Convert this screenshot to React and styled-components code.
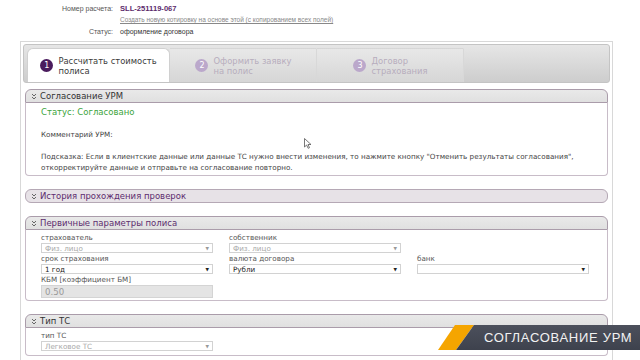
import React from 'react';
import styled, { createGlobalStyle } from 'styled-components';

const GlobalStyle = createGlobalStyle`
  html, body {
    margin: 0;
    padding: 0;
    background: #ffffff;
    overflow: hidden;
  }
`;

const tabs = [
    { num: 1, lines: ['Рассчитать стоимость', 'полиса'], active: true, width: 143 },
    { num: 2, lines: ['Оформить заявку', 'на полис'], width: 147 },
    { num: 3, lines: ['Договор', 'страхования'], width: 147 },
];

const Chevrons = () => (
    <svg width="6" height="7" viewBox="0 0 6 7">
        <path d="M1 1 L3 3 L5 1 M1 4 L3 6 L5 4" fill="none" stroke="#666" strokeWidth="1"/>
    </svg>
);

const Select = ({ value, muted }) => (
    <SelectBox muted={muted}>
        <span>{value}</span>
        <Arrow muted={muted}>▼</Arrow>
    </SelectBox>
);

const Field = ({ label, children }) => (
    <FieldBox>
        <FieldLabel>{label}</FieldLabel>
        {children}
    </FieldBox>
);

class App extends React.Component {
    render() {
        return (
            <Page>
                <GlobalStyle/>
                <Info>
                    <InfoLabel>Номер расчета:</InfoLabel>
                    <InfoNumber>SLL-251119-067</InfoNumber>
                    <span/>
                    <InfoLink>Создать новую котировку на основе этой (с копированием всех полей)</InfoLink>
                    <InfoLabel status>Статус:</InfoLabel>
                    <InfoValue status>оформление договора</InfoValue>
                </Info>
                <Wrapper>
                    <TabBar>
                        {tabs.map(t => (
                            <Tab key={t.num} active={t.active} style={{ width: t.width }}>
                                <TabNum active={t.active}>{t.num}</TabNum>
                                <TabText active={t.active}>
                                    {t.lines[0]}<br/>{t.lines[1]}
                                </TabText>
                            </Tab>
                        ))}
                    </TabBar>
                    <Panels>
                        <Panel>
                            <PanelHeader>
                                <Chevrons/>
                                <HeaderTitle>Согласование УРМ</HeaderTitle>
                            </PanelHeader>
                            <PanelBody pad="4px 15px 2px">
                                <StatusLine>Статус: Согласовано</StatusLine>
                                <Comment>Комментарий УРМ:</Comment>
                                <Hint>
                                    Подсказка: Если в клиентские данные или данные ТС нужно внести изменения, то нажмите кнопку "Отменить результаты согласования",<br/>
                                    откорректируйте данные и отправьте на согласование повторно.
                                </Hint>
                                <Cursor width="8" height="11" viewBox="0 0 8 11">
                                    <path d="M0.5 0.5 L0.5 9 L2.6 7 L4.2 10.3 L5.5 9.7 L4 6.5 L7 6.5 Z" fill="#fff" stroke="#555" strokeWidth="0.8"/>
                                </Cursor>
                            </PanelBody>
                        </Panel>

                        <Panel>
                            <PanelHeader collapsed>
                                <Chevrons/>
                                <HeaderTitle purple>История прохождения проверок</HeaderTitle>
                            </PanelHeader>
                        </Panel>

                        <Panel>
                            <PanelHeader>
                                <Chevrons/>
                                <HeaderTitle purple>Первичные параметры полиса</HeaderTitle>
                            </PanelHeader>
                            <PanelBody pad="3px 15px 2px">
                                <FieldGrid>
                                    <Field label="страхователь"><Select value="Физ. лицо" muted/></Field>
                                    <Field label="собственник"><Select value="Физ. лицо" muted/></Field>
                                    <span/>
                                    <Field label="срок страхования"><Select value="1 год"/></Field>
                                    <Field label="валюта договора"><Select value="Рубли"/></Field>
                                    <Field label="банк"><Select value=""/></Field>
                                    <Field label="КБМ [коэффициент БМ]"><ReadOnly>0.50</ReadOnly></Field>
                                </FieldGrid>
                            </PanelBody>
                        </Panel>

                        <Panel>
                            <PanelHeader>
                                <Chevrons/>
                                <HeaderTitle>Тип ТС</HeaderTitle>
                            </PanelHeader>
                            <PanelBody pad="3px 15px 4px">
                                <FieldGrid>
                                    <Field label="тип ТС"><Select value="Легковое ТС" muted/></Field>
                                </FieldGrid>
                            </PanelBody>
                        </Panel>
                    </Panels>
                </Wrapper>

                <Banner>
                    <Stripe/>
                    <Plate>СОГЛАСОВАНИЕ УРМ</Plate>
                </Banner>
            </Page>
        );
    }
}

export default App;

const Page = styled.div`
  position: relative;
  width: 640px;
  height: 360px;
  overflow: hidden;
  padding-top: 3px;
  box-sizing: border-box;
  font-family: "Liberation Sans", Arial, sans-serif;
`;

const Info = styled.div`
  display: grid;
  grid-template-columns: 113px auto;
  column-gap: 7px;
  font-size: 7px;
  line-height: 11px;
`;

const InfoLabel = styled.div`
  text-align: right;
  color: #555;
  margin-top: ${props => props.status ? '1px' : '0'};
`;

const InfoNumber = styled.div`
  font-weight: bold;
  color: #5b2a6b;
  font-size: 7.6px;
`;

const InfoLink = styled.div`
  color: #888;
  font-size: 6.5px;
  text-decoration: underline;
`;

const InfoValue = styled.div`
  color: #333;
  margin-top: ${props => props.status ? '1px' : '0'};
`;

const Wrapper = styled.div`
  margin: 4px 0 0 20px;
  width: 593px;
  height: 320px;
  box-sizing: border-box;
  border: 1px solid #d8d8d8;
  border-bottom: none;
  padding: 2px 2px 0;
`;

const TabBar = styled.div`
  display: flex;
  align-items: stretch;
  height: 39px;
  box-sizing: border-box;
  padding: 3px 0 0 3px;
  border: 1px solid #c4c4c4;
  border-radius: 3px;
  background: linear-gradient(#e6e6e6, #cdcdcd);
`;

const Tab = styled.div`
  display: flex;
  align-items: center;
  justify-content: center;
  gap: 5px;
  box-sizing: border-box;
  background: ${props => props.active ? '#ffffff' : 'linear-gradient(#e8e8e8, #d6d6d6)'};
  border: 1px solid ${props => props.active ? '#d0d0d0' : 'transparent'};
  border-right: 1px solid ${props => props.active ? '#d0d0d0' : '#d8d8d8'};
  border-bottom: none;
  border-radius: ${props => props.active ? '6px 6px 0 0' : '0'};
`;

const TabNum = styled.div`
  width: 13px;
  height: 13px;
  border-radius: 50%;
  flex-shrink: 0;
  background: ${props => props.active ? '#4a1b5d' : '#bba8cb'};
  color: #fff;
  font-family: "DejaVu Sans", Verdana, sans-serif;
  font-size: 8px;
  line-height: 13px;
  text-align: center;
`;

const TabText = styled.div`
  font-family: "DejaVu Sans", Verdana, sans-serif;
  font-size: 8.4px;
  line-height: 10px;
  color: ${props => props.active ? '#3a3a3a' : '#b7adbd'};
`;

const Panels = styled.div`
  display: flex;
  flex-direction: column;
  gap: 13px;
  padding: 6px 2px 0;
  font-family: "DejaVu Sans", Verdana, sans-serif;
`;

const Panel = styled.div`
  display: flex;
  flex-direction: column;
`;

const PanelHeader = styled.div`
  display: flex;
  align-items: center;
  gap: 3px;
  height: 14px;
  box-sizing: border-box;
  padding-left: 5px;
  border: 1px solid ${props => props.collapsed ? '#b5a8b5' : '#aa9caa'};
  border-radius: ${props => props.collapsed ? '6px' : '6px 6px 0 0'};
  background: ${props => props.collapsed ? '#e7e2e7' : 'linear-gradient(#e9e9e9, #e0e0e0)'};
`;

const HeaderTitle = styled.div`
  font-size: 8.5px;
  color: ${props => props.purple ? '#5d2d6e' : '#333'};
`;

const PanelBody = styled.div`
  position: relative;
  padding: ${props => props.pad};
  border: 1px solid #c8bcc8;
  border-top: none;
  border-radius: 0 0 4px 4px;
  background: #fff;
`;

const StatusLine = styled.div`
  color: #3ca43c;
  font-size: 8.5px;
  line-height: 11px;
`;

const Comment = styled.div`
  margin-top: 11px;
  color: #444;
  font-size: 7.2px;
  line-height: 11px;
`;

const Hint = styled.div`
  margin-top: 11px;
  color: #444;
  font-size: 7.2px;
  line-height: 11px;
  white-space: nowrap;
`;

const Cursor = styled.svg`
  position: absolute;
  left: 278px;
  top: 35px;
`;

const FieldGrid = styled.div`
  display: grid;
  grid-template-columns: repeat(3, 172px);
  column-gap: 16px;
  row-gap: 1px;
`;

const FieldBox = styled.div`
  display: flex;
  flex-direction: column;
`;

const FieldLabel = styled.div`
  font-size: 7.2px;
  line-height: 10px;
  color: #555;
`;

const SelectBox = styled.div`
  display: flex;
  align-items: center;
  justify-content: space-between;
  height: 10px;
  box-sizing: border-box;
  padding: 0 3px;
  border: 1px solid #d2d2d2;
  background: #fff;
  font-size: 7.2px;
  color: ${props => props.muted ? '#a8a8a8' : '#222'};
`;

const Arrow = styled.span`
  font-size: 4.5px;
  color: ${props => props.muted ? '#999' : '#222'};
`;

const ReadOnly = styled.div`
  height: 13px;
  box-sizing: border-box;
  padding-left: 3px;
  border: 1px solid #d4d4d4;
  background: #e4e4e4;
  color: #999;
  font-size: 8.6px;
  line-height: 12px;
`;

const Banner = styled.div`
  position: absolute;
  left: 438px;
  top: 325px;
  width: 202px;
  height: 25px;
`;

const Stripe = styled.div`
  position: absolute;
  inset: 0;
  background: #f5a500;
  clip-path: polygon(17px 0, 36px 0, 18px 100%, 0 100%);
`;

const Plate = styled.div`
  position: absolute;
  inset: 0;
  display: flex;
  align-items: center;
  padding-left: 46px;
  background: linear-gradient(#4c505c, #3e424d);
  clip-path: polygon(36px 0, 100% 0, 100% 100%, 18px 100%);
  color: #f2f2f2;
  font-family: "Liberation Sans", Arial, sans-serif;
  font-size: 13px;
  letter-spacing: 0.7px;
`;
